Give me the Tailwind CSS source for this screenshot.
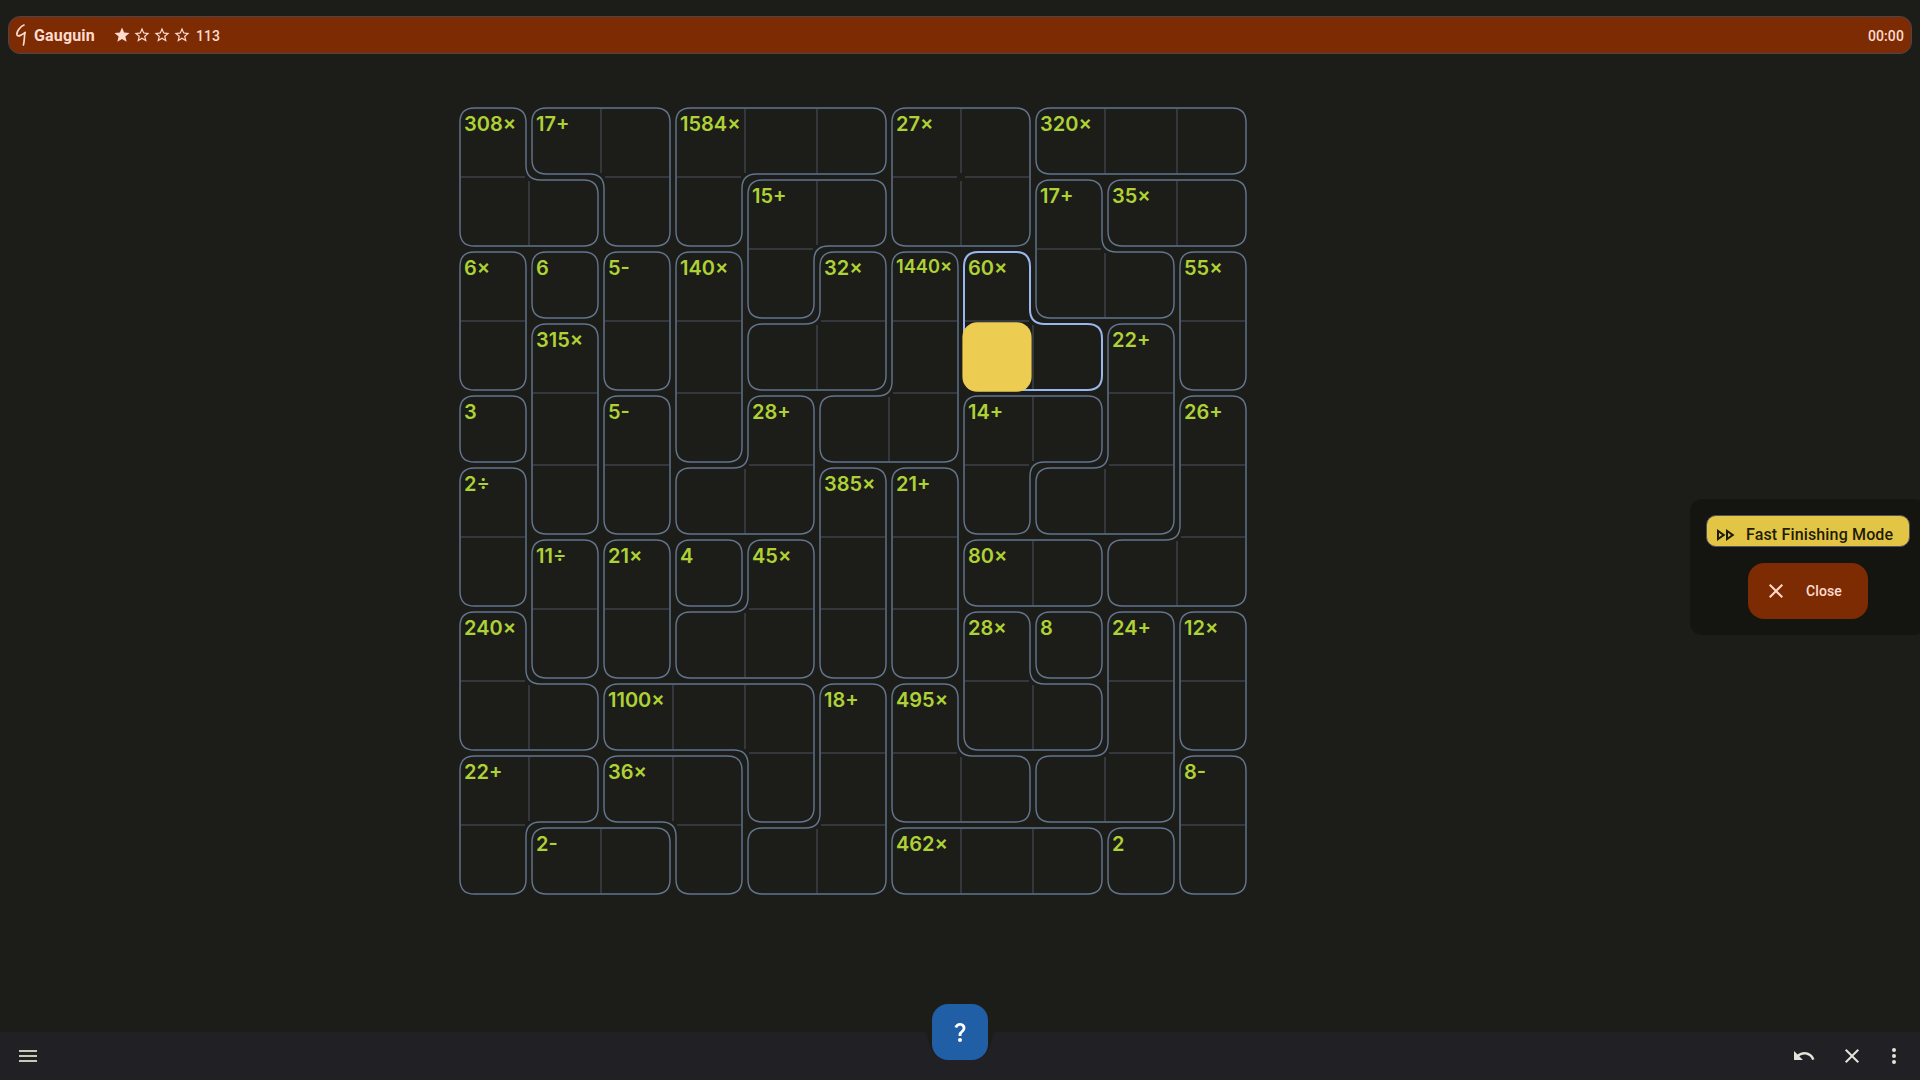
<!DOCTYPE html>
<html lang="en">
<head>
<meta charset="utf-8">
<title>Gauguin</title>
<script src="https://cdn.jsdelivr.net/npm/@tailwindcss/browser@4"></script>
</head>
<body class="flex h-screen w-screen flex-col overflow-hidden bg-[#1c1d18] font-['Roboto',sans-serif]">
  <header class="mx-2 mt-4 flex h-[38px] shrink-0 items-center rounded-xl border border-[#4b444b] bg-[#7d2b02] pr-[7px] text-[#ffdbcf]">
    <svg class="ml-[6px] h-6 w-3" viewBox="15 23 12 24" fill="none" stroke="currentColor" stroke-width="1.7" stroke-linecap="round" stroke-linejoin="round"><path d="M24 25C21 25.800 16.200 31.600 17 34.800C17.800 37.400 22.600 34.600 25.200 32.400C24 34.500 24.800 40.600 23.400 45"/></svg>
    <h1 class="ml-[7px] mt-[2px] w-[62px] text-base font-bold tracking-[0.15px]">Gauguin</h1>
    <div class="ml-[17px] flex gap-[2px]">
      <svg class="size-[18px]" viewBox="0 0 24 24" fill="currentColor"><path d="M12 17.27L18.18 21l-1.64-7.03L22 9.24l-7.19-.61L12 2 9.19 8.63 2 9.24l5.46 4.73L5.82 21z"/></svg>
      <svg class="size-[18px]" viewBox="0 0 24 24" fill="currentColor"><path d="M22 9.24l-7.19-.62L12 2 9.19 8.63 2 9.24l5.46 4.73L5.82 21 12 17.27 18.18 21l-1.63-7.03L22 9.24zM12 15.4l-3.76 2.27 1-4.28-3.32-2.88 4.38-.38L12 6.1l1.71 4.04 4.38.38-3.32 2.88 1 4.28L12 15.4z"/></svg>
      <svg class="size-[18px]" viewBox="0 0 24 24" fill="currentColor"><path d="M22 9.24l-7.19-.62L12 2 9.19 8.63 2 9.24l5.46 4.73L5.82 21 12 17.27 18.18 21l-1.63-7.03L22 9.24zM12 15.4l-3.76 2.27 1-4.28-3.32-2.88 4.38-.38L12 6.1l1.71 4.04 4.38.38-3.32 2.88 1 4.28L12 15.4z"/></svg>
      <svg class="size-[18px]" viewBox="0 0 24 24" fill="currentColor"><path d="M22 9.24l-7.19-.62L12 2 9.19 8.63 2 9.24l5.46 4.73L5.82 21 12 17.27 18.18 21l-1.63-7.03L22 9.24zM12 15.4l-3.76 2.27 1-4.28-3.32-2.88 4.38-.38L12 6.1l1.71 4.04 4.38.38-3.32 2.88 1 4.28L12 15.4z"/></svg>
    </div>
    <span class="ml-[5px] mt-[2px] text-sm font-medium tracking-[0.1px]">113</span>
    <span class="ml-auto mt-[2px] text-sm font-medium tracking-[0.1px]">00:00</span>
  </header>

  <main class="flex grow items-start pt-[51px]">
    <div class="relative ml-[457px] size-[792px] shrink-0">
      <svg id="cages" class="absolute inset-0" width="792" height="792" viewBox="0 0 792 792" fill="none"></svg>
      <div id="labels" class="relative grid grid-cols-11 grid-rows-11 size-full font-['Inter',sans-serif] font-semibold text-[#aed136]"></div>
    </div>
    <aside class="-mr-[6px] ml-auto mt-[394px] flex h-[136px] w-[236px] shrink-0 flex-col items-start rounded-xl bg-[#141510] pl-4 pt-4">
      <div class="flex h-8 w-[204px] items-center rounded-[10px] border border-[#55505a] bg-[#e3c546] text-[#1f1c05]">
        <svg class="ml-[6px] mt-[8px] size-6 shrink-0" viewBox="0 0 24 24" fill="currentColor"><path d="M15 9.86L18.03 12 15 14.14V9.86m-9 0L9.03 12 6 14.14V9.86M13 6v12l8.5-6L13 6zM4 6v12l8.5-6L4 6z"/></svg>
        <span class="ml-[9px] mt-[8px] whitespace-nowrap text-base font-medium tracking-[0.15px]">Fast Finishing Mode</span>
      </div>
      <button class="ml-[42px] mt-4 flex h-14 w-[120px] items-center rounded-2xl bg-[#7d2b02] text-[#ffdbcf]">
        <svg class="ml-4 size-6" viewBox="0 0 24 24" fill="currentColor"><path d="M19 6.41L17.59 5 12 10.59 6.41 5 5 6.41 10.59 12 5 17.59 6.41 19 12 13.41 17.59 19 19 17.59 13.41 12z"/></svg>
        <span class="ml-[18px] text-sm font-medium tracking-[0.1px]">Close</span>
      </button>
    </aside>
  </main>

  <footer class="relative flex h-12 shrink-0 items-center bg-[#212025] pl-4 pr-[14px] text-[#e3e3d9]">
    <svg class="size-6 text-[#c7c9b7]" viewBox="0 0 24 24" fill="currentColor"><path d="M3 18h18v-2H3v2zm0-5h18v-2H3v2zm0-7v2h18V6H3z"/></svg>
    <svg class="absolute left-[924px] top-0" width="72" height="34" viewBox="0 0 72 34"><path d="M0 0C2.5 1 3.5 4 4 7C5.5 18 13 28 24 28H48C59 28 66.5 18 68 7C68.5 4 69.5 1 72 0Z" fill="#1c1d18"/></svg>
    <button class="absolute -top-7 left-[932px] flex size-14 items-center justify-center rounded-2xl bg-[#205fa6] text-white">
      <svg class="size-6" viewBox="0 0 24 24" fill="currentColor"><path d="M11.07 12.85c.77-1.39 2.25-2.21 3.11-3.44.91-1.29.4-3.7-2.18-3.7-1.69 0-2.52 1.28-2.87 2.34L6.54 6.96C7.25 4.83 9.18 3 11.99 3c2.35 0 3.96 1.07 4.78 2.41.7 1.15 1.11 3.3.03 4.9-1.2 1.77-2.35 2.31-2.97 3.45-.25.46-.35.76-.35 2.24h-2.89c-.01-.78-.13-2.05.48-3.15zM14 20c0 1.1-.9 2-2 2s-2-.9-2-2 .9-2 2-2 2 .9 2 2z"/></svg>
    </button>
    <svg class="ml-auto size-6" viewBox="0 0 24 24" fill="currentColor"><path d="M12.5 8c-2.65 0-5.05.99-6.9 2.6L2 7v9h9l-3.62-3.62c1.39-1.16 3.16-1.88 5.12-1.88 3.54 0 6.55 2.31 7.6 5.5l2.37-.78C21.08 11.03 17.15 8 12.5 8z"/></svg>
    <svg class="ml-6 size-6" viewBox="0 0 24 24" fill="currentColor"><path d="M19 6.41L17.59 5 12 10.59 6.41 5 5 6.41 10.59 12 5 17.59 6.41 19 12 13.41 17.59 19 19 17.59 13.41 12z"/></svg>
    <svg class="ml-[18px] size-6" viewBox="0 0 24 24" fill="currentColor"><circle cx="12" cy="6" r="2"/><circle cx="12" cy="12" r="2"/><circle cx="12" cy="18" r="2"/></svg>
  </footer>

<script>
// One letter per cage; equal letters belong to the same cage.
const map = [
  'ABBCCCDDEEE',
  'AABCFFDDGHH',
  'IJKLFMNOGGP',
  'IQKLMMNOORP',
  'SQTLUNNVVRW',
  'XQTUUYZVRRW',
  'XabcdYZeeWW',
  'fabddYZghij',
  'ffkkklmggij',
  'nnooklmmiip',
  'nqqollrrrsp'
];
const clues = {A:'308×',B:'17+',C:'1584×',D:'27×',E:'320×',F:'15+',G:'17+',H:'35×',I:'6×',J:'6',K:'5-',L:'140×',M:'32×',N:'1440×',O:'60×',P:'55×',Q:'315×',R:'22+',S:'3',T:'5-',U:'28+',V:'14+',W:'26+',X:'2÷',Y:'385×',Z:'21+',a:'11÷',b:'21×',c:'4',d:'45×',e:'80×',f:'240×',g:'28×',h:'8',i:'24+',j:'12×',k:'1100×',l:'18+',m:'495×',n:'22+',o:'36×',p:'8-',q:'2-',r:'462×',s:'2'};
const P = 72, IN = 3, R = 14.4, N = 11;
const at = (r, c) => (map[r] && map[r][c]) || '';

// Walk a cage's outline clockwise, inset it and round every corner.
function outline(id) {
  const next = {};
  for (let r = 0; r < N; r++) for (let c = 0; c < N; c++) {
    if (at(r, c) !== id) continue;
    if (at(r - 1, c) !== id) next[c + ',' + r] = [1, 0];
    if (at(r, c + 1) !== id) next[(c + 1) + ',' + r] = [0, 1];
    if (at(r + 1, c) !== id) next[(c + 1) + ',' + (r + 1)] = [-1, 0];
    if (at(r, c - 1) !== id) next[c + ',' + (r + 1)] = [0, -1];
  }
  const start = Object.keys(next)[0];
  let [x, y] = start.split(',').map(Number);
  const steps = [];
  do { const d = next[x + ',' + y]; steps.push([x, y, d]); x += d[0]; y += d[1]; } while (x + ',' + y !== start);
  let path = '';
  steps.forEach(([px, py, d], i) => {
    const b = steps[(i + steps.length - 1) % steps.length][2];
    if (b[0] === d[0] && b[1] === d[1]) return;
    const cx = px * P + (-b[1] - d[1]) * IN, cy = py * P + (b[0] + d[0]) * IN;
    path += (path ? 'L' : 'M') + (cx - b[0] * R) + ' ' + (cy - b[1] * R) + 'Q' + cx + ' ' + cy + ' ' + (cx + d[0] * R) + ' ' + (cy + d[1] * R);
  });
  return path + 'Z';
}

let svg = '';
for (let r = 0; r < N; r++) for (let c = 0; c < N; c++) {
  const x = c * P, y = r * P;
  if (at(r, c) === at(r + 1, c)) svg += `<path d="M${x + 4} ${y + 72}h64" stroke="#34373c" stroke-width="2"/>`;
  if (at(r, c) === at(r, c + 1)) svg += `<path d="M${x + 72} ${y + 4}v64" stroke="#34373c" stroke-width="2"/>`;
}
for (const id in clues) if (id !== 'O') svg += `<path d="${outline(id)}" stroke="#62748e" stroke-width="1.44"/>`;
svg += `<path d="${outline('O')}" stroke="#99b7ee" stroke-width="2"/>`;
svg += '<rect x="505.4" y="217.2" width="69.2" height="69.6" rx="15" fill="#eccd52"/>';
document.getElementById('cages').innerHTML = svg;

const seen = {};
let cells = '';
for (let r = 0; r < N; r++) for (let c = 0; c < N; c++) {
  const id = at(r, c);
  const t = seen[id] ? '' : clues[id];
  seen[id] = true;
  cells += t === '1440×'
    ? `<div class="whitespace-nowrap pl-[7px] pt-[5px] text-[18.2px] leading-6">${t}</div>`
    : `<div class="whitespace-nowrap pl-[7px] pt-[7px] text-[20px] leading-6">${t}</div>`;
}
document.getElementById('labels').innerHTML = cells;
</script>
</body>
</html>
